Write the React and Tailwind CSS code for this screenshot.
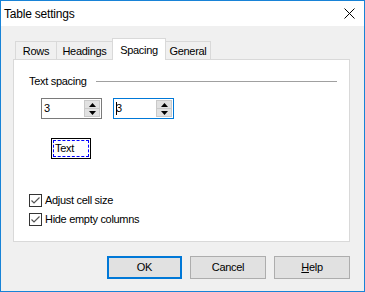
function SpinBox({ value, focused }) {
  return (
    <div
      className={`flex w-[61px] h-[21px] bg-white border ${
        focused ? 'border-[#0078d7]' : 'border-[#7a7a7a]'
      }`}
    >
      <div className="flex-1 flex items-center pl-[2px] leading-none">
        {focused && <span className="w-px h-[13px] bg-black -mr-px" />}
        <span>{value}</span>
      </div>
      <div className="flex flex-col w-[17px] py-px pr-px">
        <div className="flex-1 flex items-center justify-center bg-[#e1e1e1] border border-[#c9c9c9]">
          <svg width="7" height="4" viewBox="0 0 7 4">
            <polygon points="0,4 7,4 3.5,0" fill="#000" />
          </svg>
        </div>
        <div className="flex-1 flex items-center justify-center bg-[#e1e1e1] border border-[#c9c9c9] border-t-0">
          <svg width="7" height="4" viewBox="0 0 7 4">
            <polygon points="0,0 7,0 3.5,4" fill="#000" />
          </svg>
        </div>
      </div>
    </div>
  );
}

function CheckRow({ label }) {
  return (
    <div className="flex items-center h-[19px]">
      <div className="w-[13px] h-[13px] border border-[#333] bg-white flex items-center justify-center">
        <svg width="11" height="11" viewBox="0 0 11 11">
          <polyline points="1.5,5.5 4,8 9.5,2.5" fill="none" stroke="#555" strokeWidth="1.2" />
        </svg>
      </div>
      <span className="ml-[3px]">{label}</span>
    </div>
  );
}

function Tab({ label, active, width }) {
  if (active) {
    return (
      <div
        className={`${width} h-[22px] -ml-px pt-[2px] text-center bg-white border border-[#d9d9d9] border-b-0 relative z-10 -mb-px`}
      >
        {label}
      </div>
    );
  }
  return (
    <div
      className={`${width} h-[18px] -ml-px first:ml-0 pt-[1px] text-center bg-[#f0f0f0] border border-[#d9d9d9] border-b-0 leading-[16px]`}
    >
      {label}
    </div>
  );
}

export default function App() {
  return (
    <div
      className="w-[365px] h-[292px] border border-[#1883d7] bg-[#f0f0f0] flex flex-col text-[11px] tracking-[-0.3px] text-black"
      style={{ fontFamily: "'Liberation Sans', Arial, sans-serif" }}
    >
      {/* Title bar */}
      <div className="h-[25px] bg-white flex items-center justify-between pl-[3px] pr-[9px]">
        <span className="text-[12px] tracking-[-0.2px]">Table settings</span>
        <svg width="11" height="11" viewBox="0 0 11 11">
          <path d="M0.5 0.5 L10.5 10.5 M10.5 0.5 L0.5 10.5" stroke="#000" strokeWidth="1" />
        </svg>
      </div>

      <div className="flex flex-col pl-[12px] pr-[14px]">
        {/* Tabs */}
        <div className="flex items-end h-[21px] mt-[12px] pl-[2px] leading-[18px]">
          <Tab label="Rows" width="w-[42px]" />
          <Tab label="Headings" width="w-[57px]" />
          <Tab label="Spacing" width="w-[54px]" active />
          <Tab label="General" width="w-[46px]" />
        </div>

        {/* Panel */}
        <div className="w-[337px] h-[183px] bg-white border border-[#d9d9d9] flex flex-col pl-[15px] pr-[12px]">
          <div className="flex items-center mt-[13px] h-[16px]">
            <span>Text spacing</span>
            <div className="flex-1 h-px bg-[#a0a0a0] ml-[9px]" />
          </div>

          <div className="flex gap-[11px] mt-[9px] ml-[12px]">
            <SpinBox value="3" />
            <SpinBox value="3" focused />
          </div>

          <div className="mt-[19px] ml-[22px] w-[40px] h-[21px] border border-black p-px">
            <div className="w-full h-full border border-dashed border-[#0000ff] flex items-center pl-px leading-none">
              Text
            </div>
          </div>

          <div className="flex flex-col mt-[32px]">
            <CheckRow label="Adjust cell size" />
            <CheckRow label="Hide empty columns" />
          </div>
        </div>

        {/* Buttons */}
        <div className="flex justify-end gap-[8px] mt-[14px]">
          <button className="w-[75px] h-[23px] bg-[#e1e1e1] border-2 border-[#0078d7]">OK</button>
          <button className="w-[76px] h-[23px] bg-[#e1e1e1] border border-[#adadad]">Cancel</button>
          <button className="w-[76px] h-[23px] bg-[#e1e1e1] border border-[#adadad]">
            <span className="underline">H</span>elp
          </button>
        </div>
      </div>
    </div>
  );
}
